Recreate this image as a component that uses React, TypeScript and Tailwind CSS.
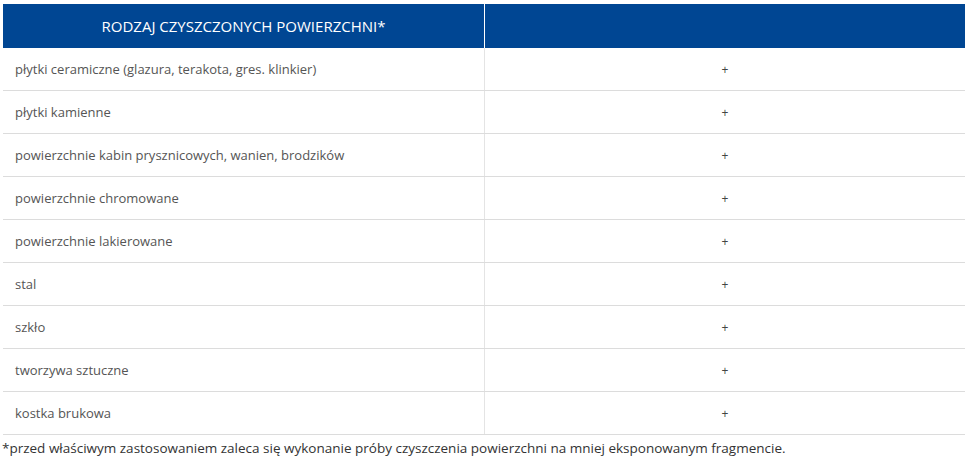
const rows = [
  "płytki ceramiczne (glazura, terakota, gres. klinkier)",
  "płytki kamienne",
  "powierzchnie kabin prysznicowych, wanien, brodzików",
  "powierzchnie chromowane",
  "powierzchnie lakierowane",
  "stal",
  "szkło",
  "tworzywa sztuczne",
  "kostka brukowa",
];

export default function App() {
  return (
    <div className="w-[971px] h-[458px] bg-white pt-[4px] pl-[3px] font-['Open_Sans',sans-serif] text-[13px] text-[#555]">
      <div className="w-[962px]">
        <div className="grid grid-cols-[481px_1px_480px] h-[44px] bg-[#004693] text-white">
          <div className="flex items-center justify-center text-[15px] uppercase pt-[1px]">
            Rodzaj czyszczonych powierzchni*
          </div>
          <div className="bg-white" />
          <div />
        </div>
        {rows.map((r) => (
          <div
            key={r}
            className="grid grid-cols-[481px_1px_480px] h-[43px] border-b border-[#dcdcdc]"
          >
            <div className="flex items-center pl-[12px] pt-[1px]">{r}</div>
            <div className="bg-[#e4e4e4]" />
            <div className="flex items-center justify-center text-[12px] text-[#444] pt-[1px]">+</div>
          </div>
        ))}
        <div className="-ml-[1px] mt-[3px] text-[13.5px] text-[#333]">
          *przed właściwym zastosowaniem zaleca się wykonanie próby czyszczenia powierzchni na mniej eksponowanym fragmencie.
        </div>
      </div>
    </div>
  );
}
